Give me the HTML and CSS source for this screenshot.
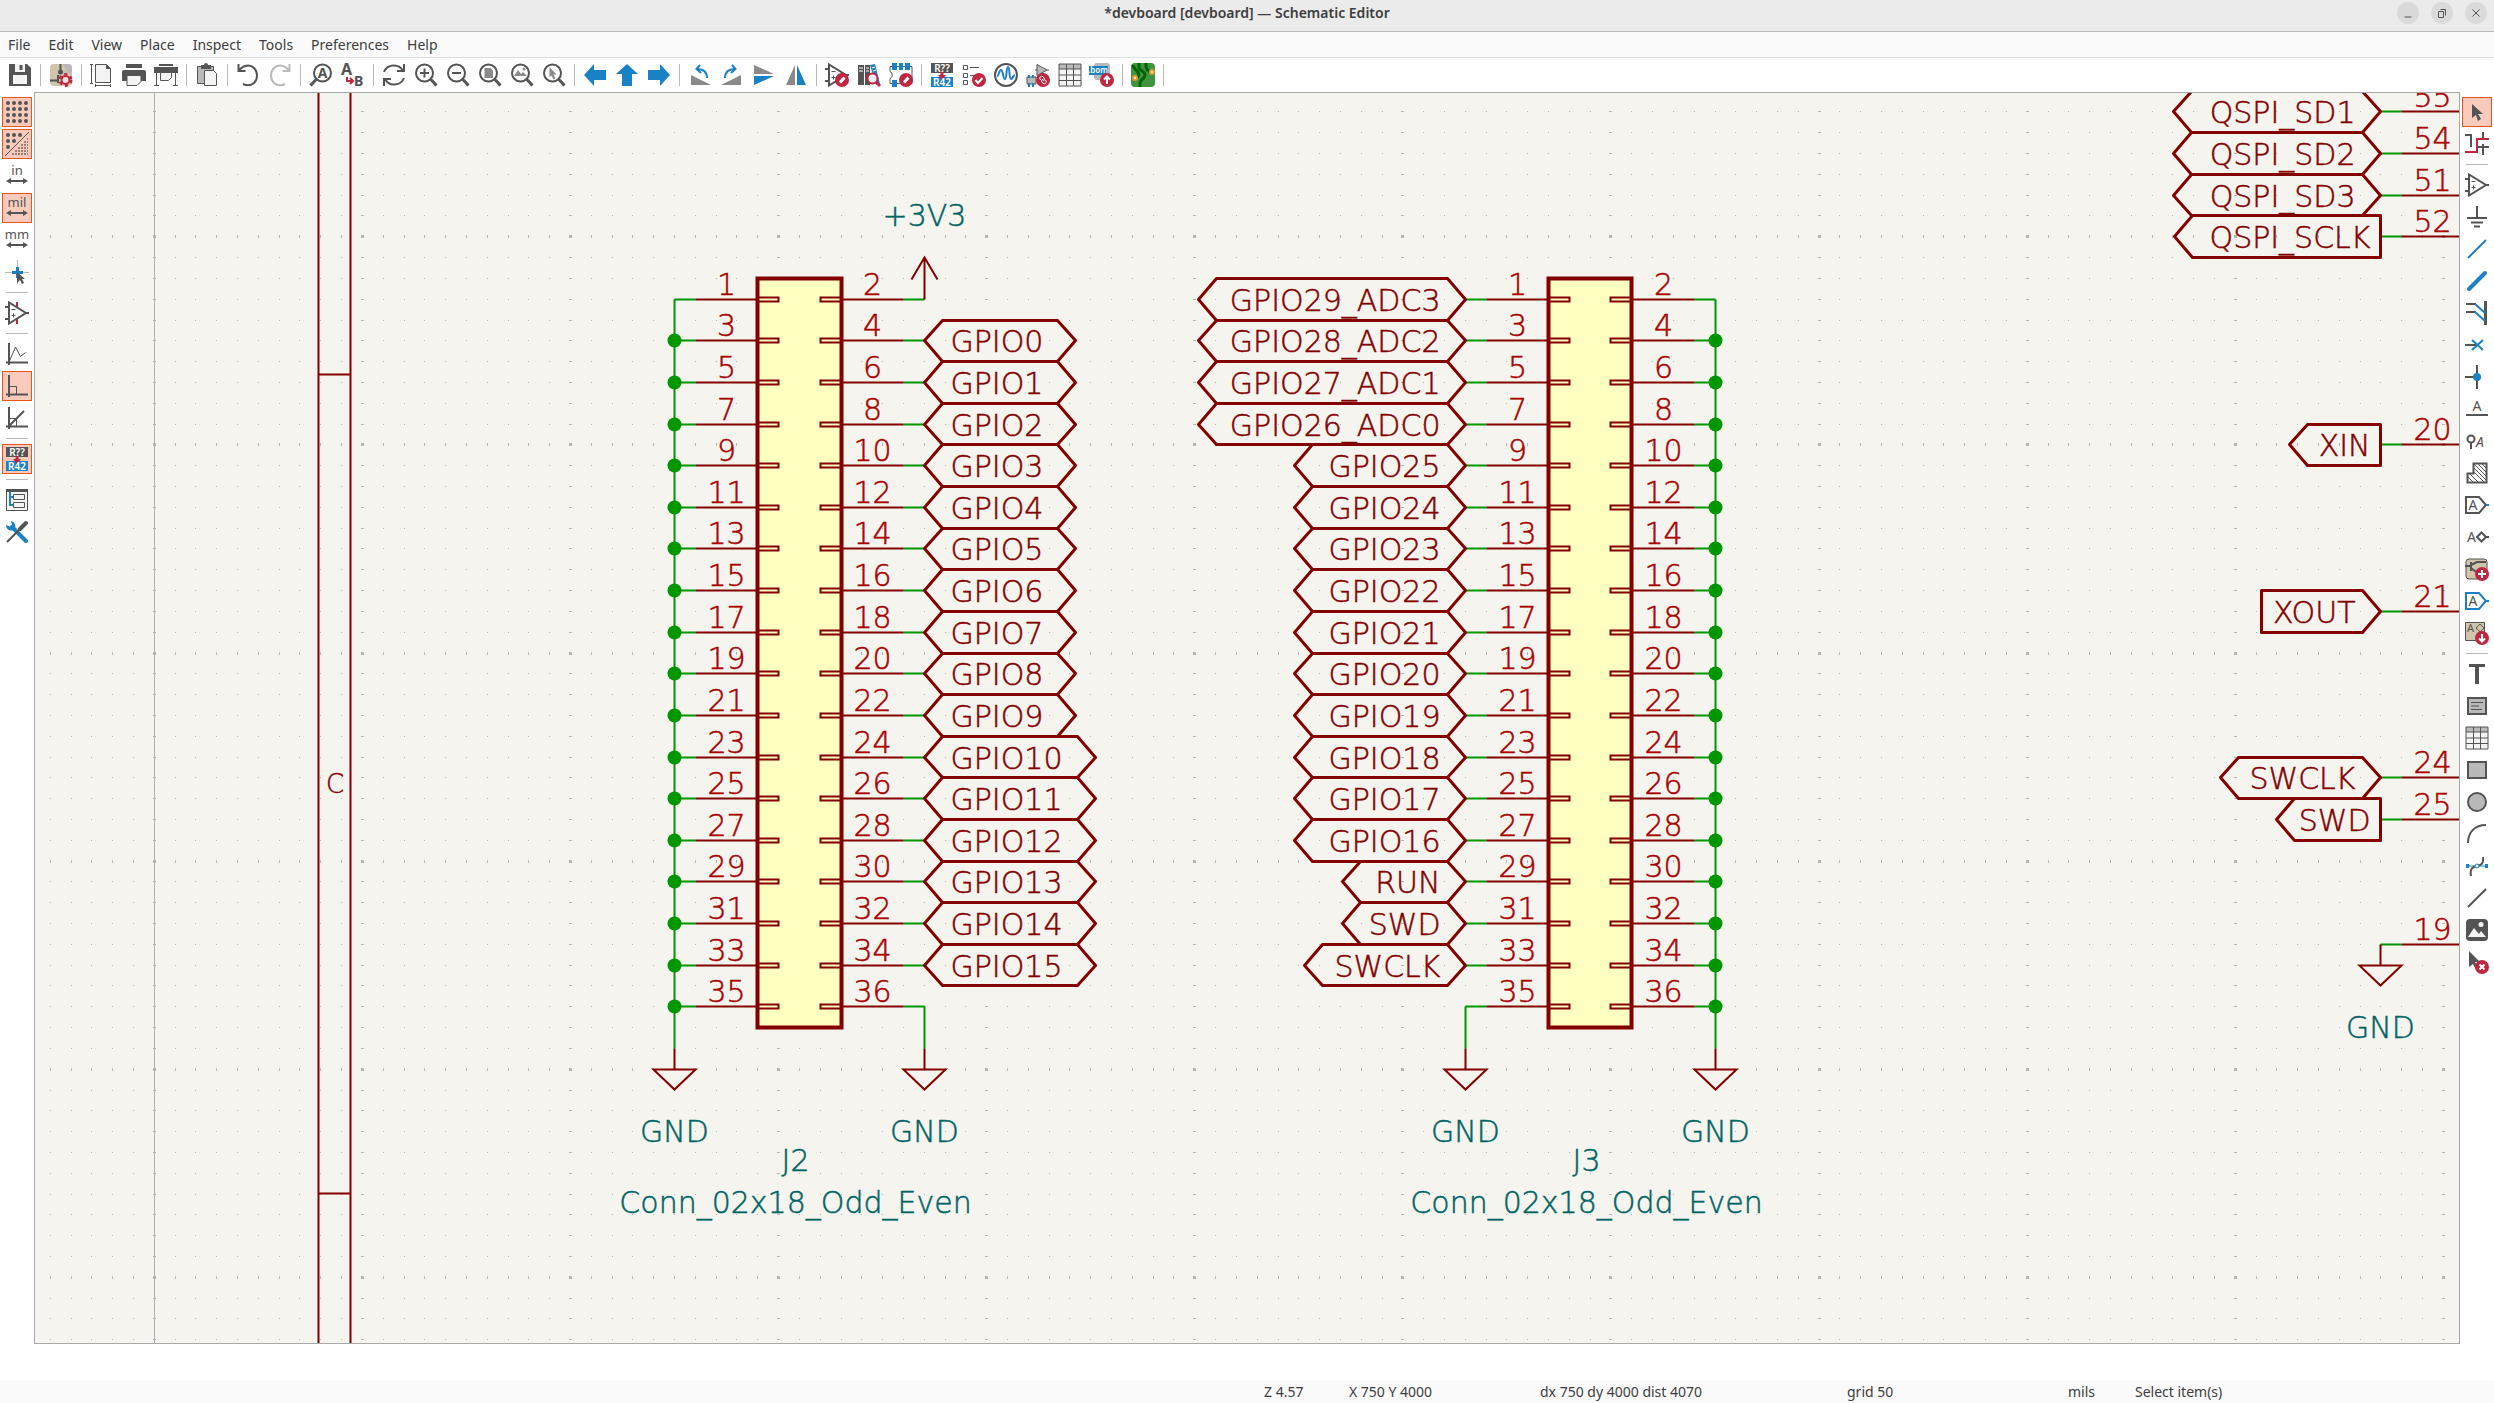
FILE: index.html
```html
<!DOCTYPE html>
<html lang="en">
<head>
<meta charset="utf-8">
<title>*devboard [devboard] — Schematic Editor</title>
<link rel="stylesheet" href="styles.css">
</head>
<body>
<svg class="defs" aria-hidden="true">
  <symbol id="opamp" viewBox="0 0 24 24"><path class="s" d="M4 1.5v21L21 12zM0 6h4M0 18h4M20 12h4"/><path class="s thin" d="M6.500 8.500h4M6.500 14.500h4M8.500 12.500v4"/></symbol>
  <symbol id="lens" viewBox="0 0 24 24"><circle class="s" cx="10.500" cy="10" r="8.500"/><path class="s thick" d="M16.500 16l6 6.500"/></symbol>
  <symbol id="annotate" viewBox="0 0 24 24"><path class="f" d="M1 0h22v10H1z"/><path class="fb" d="M1 14h22v10H1z"/><path class="fr" d="M10.500 9h3v3H16l-4 5-4-5h2.500z"/><text class="mini white" x="12" y="9" text-anchor="middle">R??</text><text class="mini white" x="12" y="23" text-anchor="middle">R42</text></symbol>
  <symbol id="pencil" viewBox="0 0 24 24"><circle class="badge" cx="17" cy="17" r="7"/><path class="w thick" d="M15 19.500l4.500-5"/></symbol>
  <symbol id="table" viewBox="0 0 24 24"><path class="fw" d="M1 1h22v22H1z"/><path class="fm" d="M1 1h22v5H1z"/><path class="s thin" d="M1 1h22v22H1zM1 6h22M1 12h22M1 17.500h22M8.500 1v22M15.500 1v22"/></symbol>
</svg>

<header class="titlebar">
  <h1>*devboard [devboard] — Schematic Editor</h1>
  <div class="window-buttons">
    <button aria-label="Minimize"><svg viewBox="0 0 22 22"><path class="s thin" d="M7.500 15h7"/></svg></button>
    <button aria-label="Restore"><svg viewBox="0 0 22 22"><path class="s thin" d="M7.500 9.500h5v6h-5zM9.500 7.500h5v6"/></svg></button>
    <button aria-label="Close"><svg viewBox="0 0 22 22"><path class="s thin" d="M7.500 7.500l7 7M14.500 7.500l-7 7"/></svg></button>
  </div>
</header>

<nav class="menubar">
  <button>File</button><button>Edit</button><button>View</button><button>Place</button><button>Inspect</button><button>Tools</button><button>Preferences</button><button>Help</button>
</nav>

<div class="toolbar" role="toolbar" aria-label="Main">
  <button aria-label="Save"><svg viewBox="0 0 24 24"><path class="f" d="M1 1h18l4 4v18H1z"/><path class="fw" d="M7 1h10v8H7zM5 12h14v9H5z"/><path class="f" d="M11.500 2h3v5h-3z"/></svg></button>
  <hr>
  <button aria-label="Schematic setup"><svg viewBox="0 0 24 24"><rect class="tan" x="1" y="1" width="22" height="22" rx="4"/><path class="fm" d="M14 1h5a4 4 0 0 1 4 4v5h-5z"/><path class="s" d="M11.500 1v7M1 17.500h8M9 12v8"/><circle class="f" cx="11.500" cy="9" r="2.500"/><circle class="gear-teeth" cx="16.500" cy="17" r="5.500"/><circle class="gear" cx="16.500" cy="17" r="4"/></svg></button>
  <hr>
  <button aria-label="Page settings"><svg viewBox="0 0 24 24"><path class="fw s thin" d="M5.500 1.500h11l4 4v14h-15z"/><path class="f" d="M16 1l5 5h-5z"/><path class="s thin" d="M1.500 1v20M0 1.500h3M0 20.500h3M5 22.500h16M5.500 21v3M20.500 21v3"/></svg></button>
  <button aria-label="Print"><svg viewBox="0 0 24 24"><path class="f" d="M4 1h16v4H4zM2 7h20a2 2 0 0 1 2 2v9H0V9a2 2 0 0 1 2-2z"/><path class="fw s thin" d="M5 12.500h14v6l-4 4H5z"/></svg></button>
  <button aria-label="Plot"><svg viewBox="0 0 24 24"><path class="f" d="M5 1h14v2H5zM0 4h24v6H0z"/><path class="fw s thin" d="M6.500 9.500h11v5l-3 3h-8z"/><path class="s thin" d="M2.500 10v12M21.500 10v12M0 22.500h5M19 22.500h5"/></svg></button>
  <hr>
  <button aria-label="Paste"><svg viewBox="0 0 24 24"><path class="fm s thin" d="M2.500 3.500h16v17h-16z"/><path class="f" d="M6 2h3a2 2 0 0 1 4 0h3v4H6z"/><path class="fw s thin" d="M9.500 7.500h9l3 3v12h-12z"/></svg></button>
  <hr>
  <button aria-label="Undo"><svg viewBox="0 0 24 24"><path class="s" d="M2.500 1v7h7M3 7.500C7 2 14 1 18 5s4 11 0 15c-3 2.500-7 3-11 1"/></svg></button>
  <button aria-label="Redo" disabled><svg viewBox="0 0 24 24"><path class="s" d="M21.500 1v7h-7M21 7.500C17 2 10 1 6 5s-4 11 0 15c3 2.500 7 3 11 1"/></svg></button>
  <hr>
  <button aria-label="Find"><svg viewBox="0 0 24 24"><circle class="s" cx="13.500" cy="10" r="8.500"/><path class="s thick" d="M7.500 16l-6 6.500"/><text class="letter bold" x="13.500" y="15" text-anchor="middle">A</text></svg></button>
  <button aria-label="Find and replace"><svg viewBox="0 0 24 24"><text class="letter big bold" x="0" y="12">A</text><text class="letter bold" x="13" y="23">B</text><path class="sr" d="M6 14v4h5M9 15l3 3-3 3"/></svg></button>
  <hr>
  <button aria-label="Refresh"><svg viewBox="0 0 24 24"><path class="s" d="M2 9C5 1 17 0 21 8M22 1v7h-7M22 15c-3 8-15 9-19 1M2 23v-7h7"/></svg></button>
  <button aria-label="Zoom in"><svg viewBox="0 0 24 24"><use href="#lens"/><path class="s" d="M6 10h9M10.500 5.500v9"/></svg></button>
  <button aria-label="Zoom out"><svg viewBox="0 0 24 24"><use href="#lens"/><path class="s" d="M6 10h9"/></svg></button>
  <button aria-label="Zoom to page"><svg viewBox="0 0 24 24"><use href="#lens"/><path class="fg" d="M6.500 5h6l2.500 2.500V15H6.500z"/></svg></button>
  <button aria-label="Zoom to objects"><svg viewBox="0 0 24 24"><use href="#lens"/><path class="fg" d="M4 13l4-6 3 4 2-2 4 4z"/><circle class="fg" cx="14" cy="6" r="1.500"/></svg></button>
  <button aria-label="Zoom to selection"><svg viewBox="0 0 24 24"><use href="#lens"/><path class="fg" d="M7.500 4l7 7.500h-3l2 4-2 1-2-4-2 2z"/></svg></button>
  <hr>
  <button aria-label="Navigate back"><svg viewBox="0 0 24 24"><path class="fb" d="M1 12L11 1v6h12v10H11v6z"/></svg></button>
  <button aria-label="Navigate up"><svg viewBox="0 0 24 24"><path class="fb" d="M12 1l11 10h-6v12H7V11H1z"/></svg></button>
  <button aria-label="Navigate forward"><svg viewBox="0 0 24 24"><path class="fb" d="M23 12L13 1v6H1v10h12v6z"/></svg></button>
  <hr>
  <button aria-label="Rotate left"><svg viewBox="0 0 24 24"><path class="fg" d="M3 12l20 10H3z"/><path class="sb" d="M19 15c0-6-3-9-10-9M12 2L8.500 6l4.500 4"/></svg></button>
  <button aria-label="Rotate right"><svg viewBox="0 0 24 24"><path class="fg" d="M21 12L1 22h20z"/><path class="sb" d="M5 15c0-6 3-9 10-9M12 2l3.500 4-4.500 4"/></svg></button>
  <button aria-label="Mirror vertically"><svg viewBox="0 0 24 24"><path class="fg" d="M2 2l20 9H2z"/><path class="fb" d="M2 22l20-9H2z"/></svg></button>
  <button aria-label="Mirror horizontally"><svg viewBox="0 0 24 24"><path class="fg" d="M2 22L11 2v20z"/><path class="fb" d="M22 22L13 2v20z"/></svg></button>
  <hr>
  <button aria-label="Symbol editor"><svg viewBox="0 0 24 24"><use href="#opamp"/><use href="#pencil"/></svg></button>
  <button aria-label="Symbol library browser"><svg viewBox="0 0 24 24"><path class="f" d="M1 2h6v20H1zM8 2h5v20H8z"/><path class="fb" d="M13 2l5-1 5 20-4 1z"/><path class="w thin" d="M2 5h4M2 8h4M9 5h3M9 8h3M15 5l3-1M16 8l3-1"/><circle class="sr lensglass" cx="15.500" cy="15.500" r="5"/><path class="sr thick" d="M19 19l4 4"/></svg></button>
  <button aria-label="Footprint editor"><svg viewBox="0 0 24 24"><path class="s thin" d="M1 3.500h22v17H1v-5c3-1 3-6 0-7z"/><path class="fb" d="M3 0h5v7H3zM10 0h4v7h-4zM16 0h5v7h-5zM3 17h5v7H3z"/><use href="#pencil"/></svg></button>
  <hr>
  <button aria-label="Annotate"><svg viewBox="0 0 24 24"><use href="#annotate"/></svg></button>
  <button aria-label="Electrical rules checker"><svg viewBox="0 0 24 24"><path class="s thin" d="M1.500 2.500h4v4h-4zM1.500 10.500h4v4h-4zM1.500 17.500h4v4h-4zM8 4.500h9M8 12.500h7"/><circle class="badge" cx="17" cy="17" r="7"/><path class="w" d="M13.500 17l2.500 3 4.500-5"/></svg></button>
  <button aria-label="Simulator"><svg viewBox="0 0 24 24"><circle class="s" cx="12" cy="12" r="11"/><path class="sb" d="M3 13c2 0 2-6 4-6s2 9 4 9 1-12 3-12 1 12 3 12 2-4 4-4"/></svg></button>
  <button aria-label="Assign footprints"><svg viewBox="0 0 24 24"><path class="fm s thin" d="M11 1.500v11l10-5.500zM9 7h2M21 7h2M1 14h9v7H1z"/><path class="fb" d="M2 12h2v3H2zM6 12h2v3H6zM2 20h2v4H2zM6 20h2v4H6z"/><circle class="badge" cx="17" cy="17" r="7"/><path class="w thin" d="M14.500 17l-1-2 2-2 2 1 1 2-1 2M19.500 17l1 2-2 2-2-1-1-2 1-2"/></svg></button>
  <button aria-label="Bulk edit fields"><svg viewBox="0 0 24 24"><use href="#table"/></svg></button>
  <button aria-label="Generate bill of materials"><svg viewBox="0 0 24 24"><rect class="fm" x="4" y="0" width="16" height="17" rx="3"/><path class="fb" d="M-1 3h19v9H-1z"/><text class="mini tiny white" x="8" y="10" text-anchor="middle">.bom</text><circle class="badge" cx="17" cy="17" r="7"/><path class="w" d="M17 21v-7M14 16.500l3-3 3 3"/></svg></button>
  <hr>
  <button aria-label="Open PCB editor"><svg viewBox="0 0 24 24"><rect class="pcb" width="24" height="24" rx="4"/><path class="trace" d="M8 0v4c0 4 6 4 6 8s-5 4-5 8v4M15 0v3c0 3 2 5 5 6M4 15c4 0 5-4 2-7S2 4 2 2"/><circle class="via" cx="21" cy="9" r="2"/><circle class="via" cx="4" cy="15" r="2"/></svg></button>
  <hr>
</div>

<main>
  <div class="sidebar" role="toolbar" aria-label="Display options">
    <button aria-label="Show grid" aria-pressed="true"><svg viewBox="0 0 24 24"><path class="dots" d="M3 3h19M3 9h19M3 15h19M3 21h19"/></svg></button>
    <button aria-label="Grid overrides" aria-pressed="true"><svg viewBox="0 0 24 24"><path class="dots" d="M3 3h13M3 9h7M3 15h1"/><path class="finedots" d="M22 7h1M19 10h4M16 13h7M13 16h10M10 19h13M7 22h16"/><path class="s thin" d="M0 24L24 0"/></svg></button>
    <button aria-label="Inches"><svg viewBox="0 0 24 24"><text class="unit" x="12" y="11" text-anchor="middle">in</text><path class="s" d="M4 17h16"/><path class="f" d="M1 17l5-3v6zM23 17l-5-3v6z"/></svg></button>
    <button aria-label="Mils" aria-pressed="true"><svg viewBox="0 0 24 24"><text class="unit" x="12" y="11" text-anchor="middle">mil</text><path class="s" d="M4 17h16"/><path class="f" d="M1 17l5-3v6zM23 17l-5-3v6z"/></svg></button>
    <button aria-label="Millimeters"><svg viewBox="0 0 24 24"><text class="unit" x="12" y="11" text-anchor="middle">mm</text><path class="s" d="M4 17h16"/><path class="f" d="M1 17l5-3v6zM23 17l-5-3v6z"/></svg></button>
    <button aria-label="Full-window crosshairs"><svg viewBox="0 0 24 24"><path class="sm" d="M12.500 0v24M0 12.500h24"/><path class="sb thick" d="M12.500 7v11M7 12.500h11"/><path class="f" d="M12 12l8 7h-3l2 4-2 1-2-4-3 3z"/></svg></button>
    <hr>
    <button aria-label="Show hidden pins"><svg viewBox="0 0 24 24"><path class="sr" d="M12 1v6M12 17v6"/><use href="#opamp"/></svg></button>
    <hr>
    <button aria-label="Free angle lines"><svg viewBox="0 0 24 24"><path class="s" d="M4 1v22M1 20.500h22"/><path class="s thin" d="M4.500 19L10.500 5l5 9.500 5-4"/></svg></button>
    <button aria-label="90 degree lines" aria-pressed="true"><svg viewBox="0 0 24 24"><path class="s" d="M4 1v22M1 20.500h22"/><path class="s thin" d="M4 12.500h7.500V20"/></svg></button>
    <button aria-label="45 degree lines"><svg viewBox="0 0 24 24"><path class="s" d="M4 1v22M1 20.500h22M4 20L19 5"/><path class="s thin" d="M4 12.500h7.500V20"/></svg></button>
    <hr>
    <button aria-label="Annotate automatically" aria-pressed="true"><svg viewBox="0 0 24 24"><use href="#annotate"/></svg></button>
    <hr>
    <button aria-label="Hierarchy navigator"><svg viewBox="0 0 24 24"><path class="fw s thin" d="M1.500 2v20.500h21V2z"/><path class="f" d="M1 1h22v3H1z"/><path class="sb" d="M5 4v13h4M5 9h4"/><path class="fw s thin" d="M8.500 6.500h11v5h-11zM8.500 14.500h11v5h-11z"/></svg></button>
    <button aria-label="Properties"><svg viewBox="0 0 24 24"><path class="sb heavy" d="M7 7l14 14"/><path class="fb" d="M1 5a5.500 5.500 0 0 0 8 5 5.500 5.500 0 0 0-3-9L7 5 5 6.500z"/><path class="s" d="M2 22L14 10"/><path class="s heavy" d="M15 9l6-6"/></svg></button>
  </div>

  <div class="canvas" id="canvas"><svg id="schematic" role="img" aria-label="Schematic sheet"></svg></div>

  <div class="sidebar" role="toolbar" aria-label="Drawing tools">
    <button aria-label="Select" aria-pressed="true"><svg viewBox="0 0 24 24"><path class="f" d="M7 4l11 10h-5l3 5-3 2-2-6-4 3z"/></svg></button>
    <button aria-label="Highlight net"><svg viewBox="0 0 24 24"><path class="s" d="M0 3h6v12M18 0v6M18 12v11M13 15h11"/><path class="sr" d="M0 20h12V7h12"/></svg></button>
    <hr>
    <button aria-label="Place symbol"><svg viewBox="0 0 24 24"><use href="#opamp"/></svg></button>
    <button aria-label="Place power"><svg viewBox="0 0 24 24"><path class="s" d="M12 1v12M2 13h20M6 17.500h12M9 21.500h6"/></svg></button>
    <button aria-label="Draw wire"><svg viewBox="0 0 24 24"><path class="sb" d="M3 21L21 3"/></svg></button>
    <button aria-label="Draw bus"><svg viewBox="0 0 24 24"><path class="sb heavy" d="M4 20L20 4"/></svg></button>
    <button aria-label="Wire to bus entry"><svg viewBox="0 0 24 24"><path class="s thick" d="M20.500 0v24"/><path class="s" d="M1 3h10M1 11h10"/><path class="sb" d="M10 3l10 9M10 11l10 9"/></svg></button>
    <button aria-label="No connect"><svg viewBox="0 0 24 24"><path class="s" d="M0 12h12"/><path class="sb" d="M7 7l11 10M18 7L7 17"/></svg></button>
    <button aria-label="Junction"><svg viewBox="0 0 24 24"><path class="s" d="M0 12h12M12 0v24"/><circle class="fb" cx="12" cy="12" r="4"/></svg></button>
    <button aria-label="Net label"><svg viewBox="0 0 24 24"><text class="letter" x="12" y="14" text-anchor="middle">A</text><path class="s" d="M1 18h22"/></svg></button>
    <button aria-label="Net class directive"><svg viewBox="0 0 24 24"><circle class="s" cx="6" cy="10" r="3.500"/><path class="s" d="M6 13v7"/><text class="letter italic" x="11" y="18">A</text></svg></button>
    <button aria-label="Rule area"><svg viewBox="0 0 24 24"><path class="s" d="M8.500 2.500h13v19h-19v-9h6z"/><path class="s thin" d="M8 6l14 14M9 3l13 13M13 3l9 9M17 3l5 5M8 10l12 12M4 12l10 10M3 16l6 6"/></svg></button>
    <button aria-label="Global label"><svg viewBox="0 0 24 24"><path class="s" d="M1 4h13l7 8-7 8H1z"/><path class="sb" d="M21 12h3"/><text class="letter" x="8" y="17" text-anchor="middle">A</text></svg></button>
    <button aria-label="Hierarchical label"><svg viewBox="0 0 24 24"><text class="letter" x="2" y="17">A</text><path class="s" d="M12 12l4.500-4.500L21 12l-4.500 4.500zM21 12h3"/></svg></button>
    <button aria-label="Hierarchical sheet"><svg viewBox="0 0 24 24"><rect class="s thin tan" x="1" y="2" width="21" height="20" rx="3"/><path class="s" d="M0 9h6M6 5v9M6 8l6-3h9M6 11l5 4"/><circle class="badge" cx="17" cy="17" r="7"/><path class="w" d="M13 17h8M17 13v8"/></svg></button>
    <button aria-label="Sheet pin"><svg viewBox="0 0 24 24"><path class="sb" d="M1 4h13l7 8-7 8H1zM21 12h3"/><text class="letter" x="8" y="17" text-anchor="middle">A</text></svg></button>
    <button aria-label="Sync sheet pins"><svg viewBox="0 0 24 24"><path class="s thin tan" d="M.5 1.500h19v18H.5z"/><text class="letter small" x="2" y="11">A</text><path class="s thin" d="M11 7l4-4 4 4-4 4z"/><circle class="badge" cx="17" cy="17" r="7"/><path class="w" d="M17 13v7M14 17.500l3 3 3-3"/></svg></button>
    <hr>
    <button aria-label="Text"><svg viewBox="0 0 24 24"><path class="f" d="M4 2h16v3h-6v17h-4V5H4z"/></svg></button>
    <button aria-label="Text box"><svg viewBox="0 0 24 24"><path class="s fm" d="M3 4h18v16H3z"/><path class="s thin" d="M6 8.500h12M6 12h8M6 15.500h11"/></svg></button>
    <button aria-label="Table"><svg viewBox="0 0 24 24"><use href="#table"/></svg></button>
    <button aria-label="Rectangle"><svg viewBox="0 0 24 24"><path class="s fm" d="M3 4h18v16H3z"/></svg></button>
    <button aria-label="Circle"><svg viewBox="0 0 24 24"><circle class="s fm" cx="12" cy="12" r="9"/></svg></button>
    <button aria-label="Arc"><svg viewBox="0 0 24 24"><path class="s" d="M3 21C3 10 10 3 21 3"/></svg></button>
    <button aria-label="Bezier curve"><svg viewBox="0 0 24 24"><path class="s" d="M6 22C3 6 20 18 18 3"/><path class="sb thin" d="M2 12h20"/><path class="fb" d="M1 10h3v4H1zM20 10h3v4h-3z"/><circle class="sb thin fw" cx="12" cy="12" r="2"/></svg></button>
    <button aria-label="Line"><svg viewBox="0 0 24 24"><path class="s" d="M3 21L21 3"/></svg></button>
    <button aria-label="Image"><svg viewBox="0 0 24 24"><rect class="f" x="1" y="1" width="22" height="22" rx="4"/><path class="fw" d="M3 19l6-9 5 6 2-3 5 6z"/><circle class="fw" cx="16" cy="6.500" r="2.500"/></svg></button>
    <button aria-label="Delete"><svg viewBox="0 0 24 24"><path class="f" d="M4 1l11 11h-5l3 5-3 1-2-4-4 3z"/><circle class="badge" cx="17" cy="17" r="7"/><path class="w" d="M14.500 14.500l5 5M19.500 14.500l-5 5"/></svg></button>
  </div>
</main>

<section class="messages" aria-label="Messages"></section>
<footer class="statusbar">
  <span></span><span>Z 4.57</span><span>X 750 Y 4000</span><span>dx 750 dy 4000 dist 4070</span><span>grid 50</span><span>mils</span><span>Select item(s)</span>
</footer>
<script src="schematic.js"></script>
</body>
</html>
```
FILE: styles.css
```css
* { box-sizing: border-box; }

body {
  margin: 0;
  height: 100vh;
  display: flex;
  flex-direction: column;
  overflow: hidden;
  background: #fff;
  color: #3d3d3d;
  font: 14px/20px "Noto Sans", sans-serif;
}

button {
  padding: 0;
  border: 0;
  background: none;
  color: inherit;
  font: inherit;
}

.defs { display: none; }

.titlebar {
  flex: none;
  height: 32px;
  padding: 2px 7px 0;
  display: grid;
  grid-template-columns: 1fr auto 1fr;
  align-items: start;
  background: #ebebeb;
  border-bottom: 1px solid #b9b9b9;
}
.titlebar h1 {
  grid-column: 2;
  margin: 0;
  font-size: 14px;
  line-height: 22px;
  font-weight: 600;
}
.window-buttons { display: flex; justify-content: flex-end; gap: 12px; }
.window-buttons button { width: 22px; height: 22px; border-radius: 50%; background: #dadada; }
.window-buttons svg { display: block; width: 22px; height: 22px; }

.menubar {
  flex: none;
  height: 26px;
  display: flex;
  gap: 2px;
  background: #fafafa;
  border-bottom: 1px solid #dedede;
}
.menubar button { padding: 0 8px; }

.toolbar {
  flex: none;
  height: 34px;
  padding: 0 4px;
  display: flex;
  align-items: center;
}
.toolbar button { width: 32px; height: 32px; display: grid; place-items: center; }
.toolbar hr { width: 1px; height: 22px; margin: 0 4px; border: 0; background: #b9b9b9; }
.toolbar svg, .sidebar svg { width: 24px; height: 24px; display: block; overflow: visible; }
.toolbar button:disabled { opacity: .4; }

main { flex: 1; min-height: 0; display: flex; }

.sidebar {
  flex: none;
  width: 34px;
  padding-top: 5px;
  display: flex;
  flex-direction: column;
  align-items: center;
}
.sidebar button {
  flex: none;
  width: 30px;
  height: 30px;
  margin-bottom: 2px;
  display: grid;
  place-items: center;
  border: 1px solid transparent;
}
.sidebar button[aria-pressed="true"] { background: #f9cbbc; border-color: #e95420; }
.sidebar hr { flex: none; width: 22px; height: 1px; margin: 3px 0 5px; border: 0; background: #b9b9b9; }

.canvas { flex: 1; min-width: 0; border: 1px solid #a9a9a9; background: #f5f4ef; }
.canvas svg { display: block; width: 100%; height: 100%; }

.messages { flex: none; height: 36px; }
.statusbar {
  flex: none;
  height: 23px;
  display: grid;
  grid-template-columns: 1fr 85px 191px 307px 221px 67px 359px;
  line-height: 23px;
  background: #fafafa;
}

/* icon palette */
.s, .sb, .sr, .sm, .w { fill: none; stroke: #545454; stroke-width: 2; }
.sb { stroke: #1a81c4; }
.sr { stroke: #bf2641; }
.sm { stroke: #b9b9b9; stroke-width: 1; }
.w { stroke: #fff; }
.thin { stroke-width: 1; }
.thick { stroke-width: 3; }
.heavy { stroke-width: 4; stroke-linecap: round; }
.f { fill: #545454; }
.fb { fill: #1a81c4; }
.fr { fill: #bf2641; }
.fg { fill: #8a8a8a; }
.fw { fill: #f3f3f3; }
.fm { fill: #b9b9b9; }
.tan { fill: #d0c4ab; }
.badge { fill: #bf2641; }
.lensglass { fill: #e8eef4; }
.gear { fill: #f3e3e0; stroke: #bf2641; stroke-width: 2; }
.gear-teeth { fill: none; stroke: #bf2641; stroke-width: 3; stroke-dasharray: 3 3; }
.pcb { fill: #3f9440; }
.trace { fill: none; stroke: #006400; stroke-width: 3; }
.via { fill: #fff; stroke: #e59a2c; stroke-width: 2; }
.dots { fill: none; stroke: #545454; stroke-width: 4; stroke-linecap: round; stroke-dasharray: 0 6; }
.finedots { fill: none; stroke: #9a807a; stroke-width: 2; stroke-dasharray: 2 1; }
.letter, .mini, .unit { font-family: "Noto Sans", sans-serif; fill: #545454; }
.letter { font-size: 14px; }
.mini { font-size: 10px; font-weight: 600; }
.mini.tiny { font-size: 8px; }
.unit { font-size: 13px; }
.letter.big { font-size: 16px; }
.letter.small { font-size: 11px; }
.bold { font-weight: 700; }
.italic { font-style: italic; }
.mini.white { fill: #fff; }

/* schematic layers */
.grid-dots { fill: #b5b5b5; }
.page-edge { stroke: #b0b0b0; stroke-width: 1; }
.frame, .pin, .wire, .symbol, .label { fill: none; stroke: #840000; stroke-width: 2; }
.wire { stroke: #009600; }
.body { fill: #ffffc2; stroke: #840000; stroke-width: 4; }
.label { stroke-width: 3; stroke-linejoin: round; }
.junction { fill: #009600; }
.sch-text {
  font: 200 30px "DejaVu Sans", sans-serif;
  text-anchor: middle;
  fill: #006464;
  stroke: #006464;
  stroke-width: .5;
}
.label-text, .zone { fill: #840000; stroke: #840000; }
.label-text.start { text-anchor: start; }
.label-text.end { text-anchor: end; }
.pin-number { fill: #a90000; stroke: #a90000; }
.zone { font-size: 26px; }
```
FILE: schematic.js
```js
const svg = document.getElementById("schematic");
const PITCH = 20.81;
const ORIGIN = { x: 119.3, y: 143.8 };
const X = (g) => Math.floor(ORIGIN.x + g * PITCH) + 0.5;
const Y = (g) => Math.floor(ORIGIN.y + g * PITCH) + 0.5;

function add(tag, cls, attrs, text) {
  const node = document.createElementNS("http://www.w3.org/2000/svg", tag);
  node.setAttribute("class", cls);
  for (const key in attrs) node.setAttribute(key, attrs[key]);
  if (text) node.textContent = text;
  svg.append(node);
}
const path = (cls, d) => add("path", cls, { d });
const write = (cls, x, y, text) => add("text", "sch-text " + cls, { x, y }, text);

// Grid: every tenth row and column is drawn heavier.
function grid() {
  const { clientWidth: w, clientHeight: h } = svg.parentNode;
  let d = "";
  for (let i = -5; X(i) < w; i++) {
    for (let j = -6; Y(j) < h; j++) {
      const a = i % 10 ? 1 : 3;
      const b = j % 10 ? 1 : 3;
      d += `M${X(i) - a / 2} ${Y(j) - b / 2}h${a}v${b}h${-a}z`;
    }
  }
  path("grid-dots", d);
  path("page-edge", `M${X(0)} 0V${h}`);
  path("frame", `M283.500 0V${h}M315.500 0V${h}M283.500 281.500h32M283.500 1100.500h32`);
  write("zone", 300, 700, "C");
}

// Global label whose connection point is at grid (gx, gy); len is in pixels.
function label(text, gx, gy, len, side, shape = "both") {
  const tip = X(gx), y = Y(gy), top = Y(gy - 1), bottom = Y(gy + 1);
  const s = side === "right" ? 1 : -1;
  const far = tip + s * len, notch = 18 * s;
  const near = shape === "far" ? `M${tip} ${y}V${top}` : `M${tip} ${y}L${tip + notch} ${top}`;
  const back = shape === "near" ? `H${far}V${bottom}` : `H${far - notch}L${far} ${y}L${far - notch} ${bottom}`;
  const close = shape === "far" ? `H${tip}Z` : `H${tip + notch}Z`;
  path("label", near + back + close);
  const inset = shape === "far" ? 10 : s > 0 ? 26 : 25;
  write("label-text " + (s > 0 ? "start" : "end"), tip + s * inset, y + 11, text);
}

function ground(gx, gy) {
  const x = X(gx), y = Y(gy);
  path("symbol", `M${x} ${Y(gy - 1)}V${y}M${x - 21} ${y}h42l-21 20z`);
  write("", x, y + 72, "GND");
}

function connector(gx, name) {
  const l = X(gx), r = X(gx + 4);
  add("rect", "body", { x: l, y: Y(2), width: r - l, height: Y(38) - Y(2) });
  for (let i = 0; i < 18; i++) {
    const g = 3 + 2 * i, y = Y(g);
    path("wire", `M${X(gx - 4)} ${y}H${X(gx - 3)}M${X(gx + 7)} ${y}H${X(gx + 8)}`);
    path("pin", `M${X(gx - 3)} ${y}H${l}M${r} ${y}H${X(gx + 7)}`);
    path("pin", `M${l} ${y - 2}H${X(gx + 1)}v4H${l}M${r} ${y - 2}H${X(gx + 3)}v4H${r}`);
    write("pin-number", X(gx - 1.5), y - 5, String(2 * i + 1));
    write("pin-number", X(gx + 5.5), y - 5, String(2 * i + 2));
  }
  write("", l + 38, Y(45) - 3, name);
  write("", l + 38, Y(47) - 2, "Conn_02x18_Odd_Even");
}

function rail(gx) {
  path("wire", `M${X(gx)} ${Y(3)}V${Y(39)}`);
  for (let g = 5; g <= 37; g += 2) add("circle", "junction", { cx: X(gx), cy: Y(g), r: 7 });
}

grid();

connector(29, "J2");
rail(25);
ground(25, 40);
path("wire", `M${X(37)} ${Y(37)}V${Y(39)}`);
ground(37, 40);
path("symbol", `M${X(37)} ${Y(3)}V${Y(1)}M${X(37) - 13} ${Y(1) + 22}L${X(37)} ${Y(1)}l13 22`);
write("", X(37), 133, "+3V3");
for (let n = 0; n < 16; n++) label("GPIO" + n, 37, 5 + 2 * n, n < 10 ? 151 : 171, "right");

connector(67, "J3");
rail(75);
ground(75, 40);
path("wire", `M${X(63)} ${Y(37)}V${Y(39)}`);
ground(63, 40);
["GPIO29_ADC3", "GPIO28_ADC2", "GPIO27_ADC1", "GPIO26_ADC0"].forEach((t, i) => label(t, 63, 3 + 2 * i, 267, "left"));
for (let n = 25; n >= 16; n--) label("GPIO" + n, 63, 11 + 2 * (25 - n), 171, "left");
label("RUN", 63, 31, 123, "left");
label("SWD", 63, 33, 123, "left");
label("SWCLK", 63, 35, 161, "left");

const mcuPins = [[-6, 55], [-4, 54], [-2, 51], [0, 52], [10, 20], [18, 21], [26, 24], [28, 25], [34, 19]];
for (const [g, number] of mcuPins) {
  path("wire", `M${X(107)} ${Y(g)}H${X(108)}`);
  path("pin", `M${X(108)} ${Y(g)}H${X(114)}`);
  write("pin-number", X(109.5), Y(g) - 5, String(number));
}
label("QSPI_SD1", 107, -6, 207, "left");
label("QSPI_SD2", 107, -4, 207, "left");
label("QSPI_SD3", 107, -2, 207, "left");
label("QSPI_SCLK", 107, 0, 206, "left", "far");
label("XIN", 107, 10, 91, "left", "far");
label("XOUT", 107, 18, 119, "left", "near");
label("SWCLK", 107, 26, 160, "left");
label("SWD", 107, 28, 104, "left", "far");
ground(107, 35);
```
